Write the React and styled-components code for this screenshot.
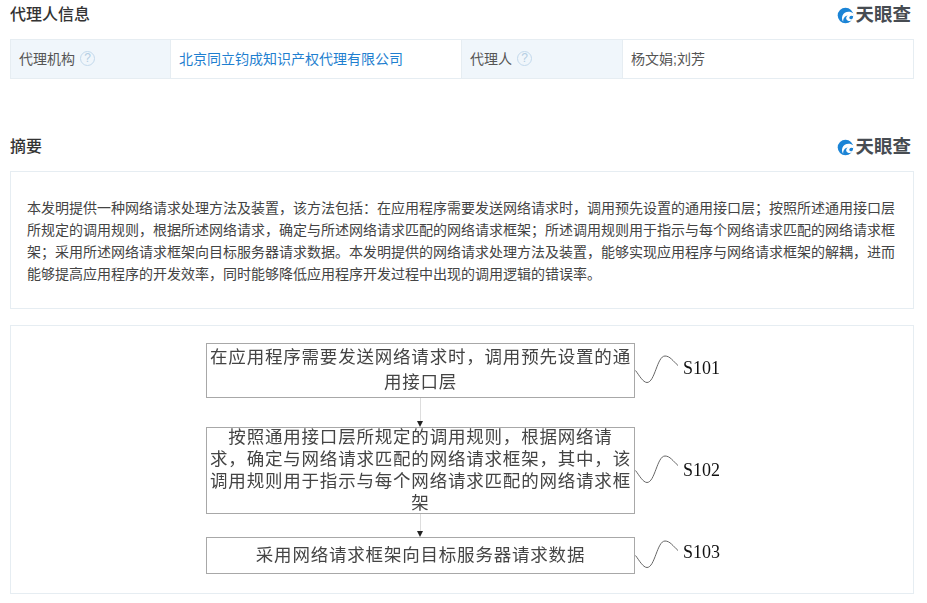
import React from 'react';
import styled, { createGlobalStyle } from 'styled-components';

const GlobalStyle = createGlobalStyle`
    html, body {
        margin: 0;
        background: #fff;
    }
    body {
        font-family: "Liberation Sans", "Noto Sans CJK SC", sans-serif;
        color: #333;
        overflow: hidden;
    }
`;

const steps = [
    { id: 'S101', lines: ['在应用程序需要发送网络请求时，调用预先设置的通', '用接口层'], height: 55, lineHeight: 25, lift: 5 },
    { id: 'S102', lines: ['按照通用接口层所规定的调用规则，根据网络请', '求，确定与网络请求匹配的网络请求框架，其中，该', '调用规则用于指示与每个网络请求匹配的网络请求框', '架'], height: 87, lineHeight: 22, lift: 1 },
    { id: 'S103', lines: ['采用网络请求框架向目标服务器请求数据'], height: 37, lineHeight: 30, lift: 7 },
];

const Logo = () => (
    <LogoWrap>
        <svg width="17" height="17" viewBox="0 0 17 17">
            <circle cx="8.5" cy="8.5" r="7.8" fill="#1b84d6" />
            <path d="M16.6 6.4C12.4 3.6 7 4.6 5.4 8.8c-.8 2.2-.4 4.4.8 6-.2-3.2 1.4-6 4.6-6.4-1.4 1-2 2.4-1.4 3.8.7 1.6 2.8 2.2 5.8 1.4l1-1.4c-2 .4-3.4 0-3.8-1-.4-1 .4-2.2 2-2.4 1 0 1.8.2 2.4.6z" fill="#fff" />
        </svg>
        <LogoText>天眼查</LogoText>
    </LogoWrap>
);

const HelpIcon = () => <Help>?</Help>;

const Curve = () => (
    <svg width="48" height="32" viewBox="0 0 48 32">
        <path d="M0.5 15.5C4 20 8 27.5 12 27.5C20 27.5 22 1 30 1C35 1 38 6 43 10.5" fill="none" stroke="#666" strokeWidth="1" />
    </svg>
);

const App = () => {
    return (
        <Page>
            <GlobalStyle />
            <SectionHead>
                <Title>代理人信息</Title>
                <Logo />
            </SectionHead>
            <InfoTable>
                <LabelCell>代理机构<HelpIcon /></LabelCell>
                <ValueCell><AgencyLink>北京同立钧成知识产权代理有限公司</AgencyLink></ValueCell>
                <LabelCell>代理人<HelpIcon /></LabelCell>
                <ValueCell>杨文娟;刘芳</ValueCell>
            </InfoTable>

            <AbstractHead>
                <Title>摘要</Title>
                <Logo />
            </AbstractHead>
            <AbstractBox>
                本发明提供一种网络请求处理方法及装置，该方法包括：在应用程序需要发送网络请求时，调用预先设置的通用接口层；按照所述通用接口层所规定的调用规则，根据所述网络请求，确定与所述网络请求匹配的网络请求框架；所述调用规则用于指示与每个网络请求匹配的网络请求框架；采用所述网络请求框架向目标服务器请求数据。本发明提供的网络请求处理方法及装置，能够实现应用程序与网络请求框架的解耦，进而能够提高应用程序的开发效率，同时能够降低应用程序开发过程中出现的调用逻辑的错误率。
            </AbstractBox>

            <FigureBox>
                <Flow>
                    {steps.map((step, i) => (
                        <React.Fragment key={step.id}>
                            {i > 0 && <Arrow $height={i === 1 ? 29 : 23} />}
                            <StepRow>
                                <StepBox $height={step.height} $lineHeight={step.lineHeight}>
                                    {step.lines.map((line) => <div key={line}>{line}</div>)}
                                </StepBox>
                                <StepTag>
                                    <Curve />
                                    <StepId $lift={step.lift}>{step.id}</StepId>
                                </StepTag>
                            </StepRow>
                        </React.Fragment>
                    ))}
                </Flow>
            </FigureBox>
        </Page>
    );
};

const Page = styled.div`
    width: 904px;
    margin-left: 10px;
`;

const SectionHead = styled.div`
    box-sizing: border-box;
    display: flex;
    align-items: center;
    justify-content: space-between;
    height: 28px;
    padding-top: 2px;
    margin-bottom: 11px;
`;

const AbstractHead = styled(SectionHead)`
    margin-top: 53px;
    margin-bottom: 11px;
`;

const Title = styled.h3`
    margin: 0;
    font-size: 16px;
    font-weight: 500;
    color: #333;
    line-height: 26px;
`;

const LogoWrap = styled.div`
    display: flex;
    align-items: center;
    gap: 1px;
    margin-right: 3px;
    height: 20px;
`;

const LogoText = styled.span`
    font-size: 18.5px;
    font-weight: 700;
    color: #474c52;
    line-height: 20px;
`;

const InfoTable = styled.div`
    display: grid;
    grid-template-columns: 160px 291px 161px 1fr;
    height: 40px;
    box-sizing: border-box;
    border: 1px solid #e6edf2;
`;

const LabelCell = styled.div`
    display: flex;
    align-items: center;
    gap: 5px;
    padding: 0 0 2px 8px;
    background: #f0f6fb;
    border-right: 1px solid #e6edf2;
    font-size: 14px;
    color: #555;
`;

const ValueCell = styled.div`
    display: flex;
    align-items: center;
    padding: 0 0 2px 8px;
    font-size: 14px;
    color: #555;
    border-right: 1px solid #e6edf2;
    &:last-child {
        border-right: none;
    }
`;

const AgencyLink = styled.a`
    color: #1f7fd0;
    cursor: pointer;
`;

const Help = styled.span`
    display: inline-flex;
    align-items: center;
    justify-content: center;
    width: 13px;
    height: 13px;
    border: 1px solid #c3d9ec;
    border-radius: 50%;
    font-size: 12px;
    color: #b4cde2;
`;

const AbstractBox = styled.div`
    box-sizing: border-box;
    height: 138px;
    padding: 25px 16px 0;
    border: 1px solid #e6edf2;
    font-size: 14px;
    line-height: 22px;
    color: #444;
`;

const FigureBox = styled.div`
    box-sizing: border-box;
    height: 269px;
    margin-top: 16px;
    padding: 17px 0 0 195px;
    border: 1px solid #e6edf2;
`;

const Flow = styled.div`
    display: flex;
    flex-direction: column;
    filter: blur(0.35px);
`;

const StepRow = styled.div`
    display: flex;
    align-items: center;
`;

const StepBox = styled.div`
    box-sizing: border-box;
    width: 429px;
    height: ${(p) => p.$height}px;
    display: flex;
    flex-direction: column;
    justify-content: center;
    padding-bottom: 1px;
    border: 1px solid #a8a8a8;
    font-family: "Liberation Serif", "Noto Sans CJK SC", serif;
    font-size: 17.5px;
    letter-spacing: 0.8px;
    line-height: ${(p) => p.$lineHeight}px;
    text-align: center;
    white-space: nowrap;
    color: #444;
`;

const StepTag = styled.div`
    display: flex;
    align-items: center;
`;

const StepId = styled.span`
    margin-bottom: ${(p) => p.$lift}px;
    font-family: "Liberation Serif", serif;
    font-size: 18px;
    color: #111;
    line-height: 20px;
`;

const Arrow = styled.div`
    position: relative;
    width: 429px;
    height: ${(p) => p.$height}px;
    &::before {
        content: "";
        position: absolute;
        left: 214px;
        top: 0;
        bottom: 4px;
        border-left: 1px solid #ddd;
    }
    &::after {
        content: "";
        position: absolute;
        left: 211px;
        bottom: 0;
        border-left: 3.5px solid transparent;
        border-right: 3.5px solid transparent;
        border-top: 6px solid #222;
    }
`;

export default App;
